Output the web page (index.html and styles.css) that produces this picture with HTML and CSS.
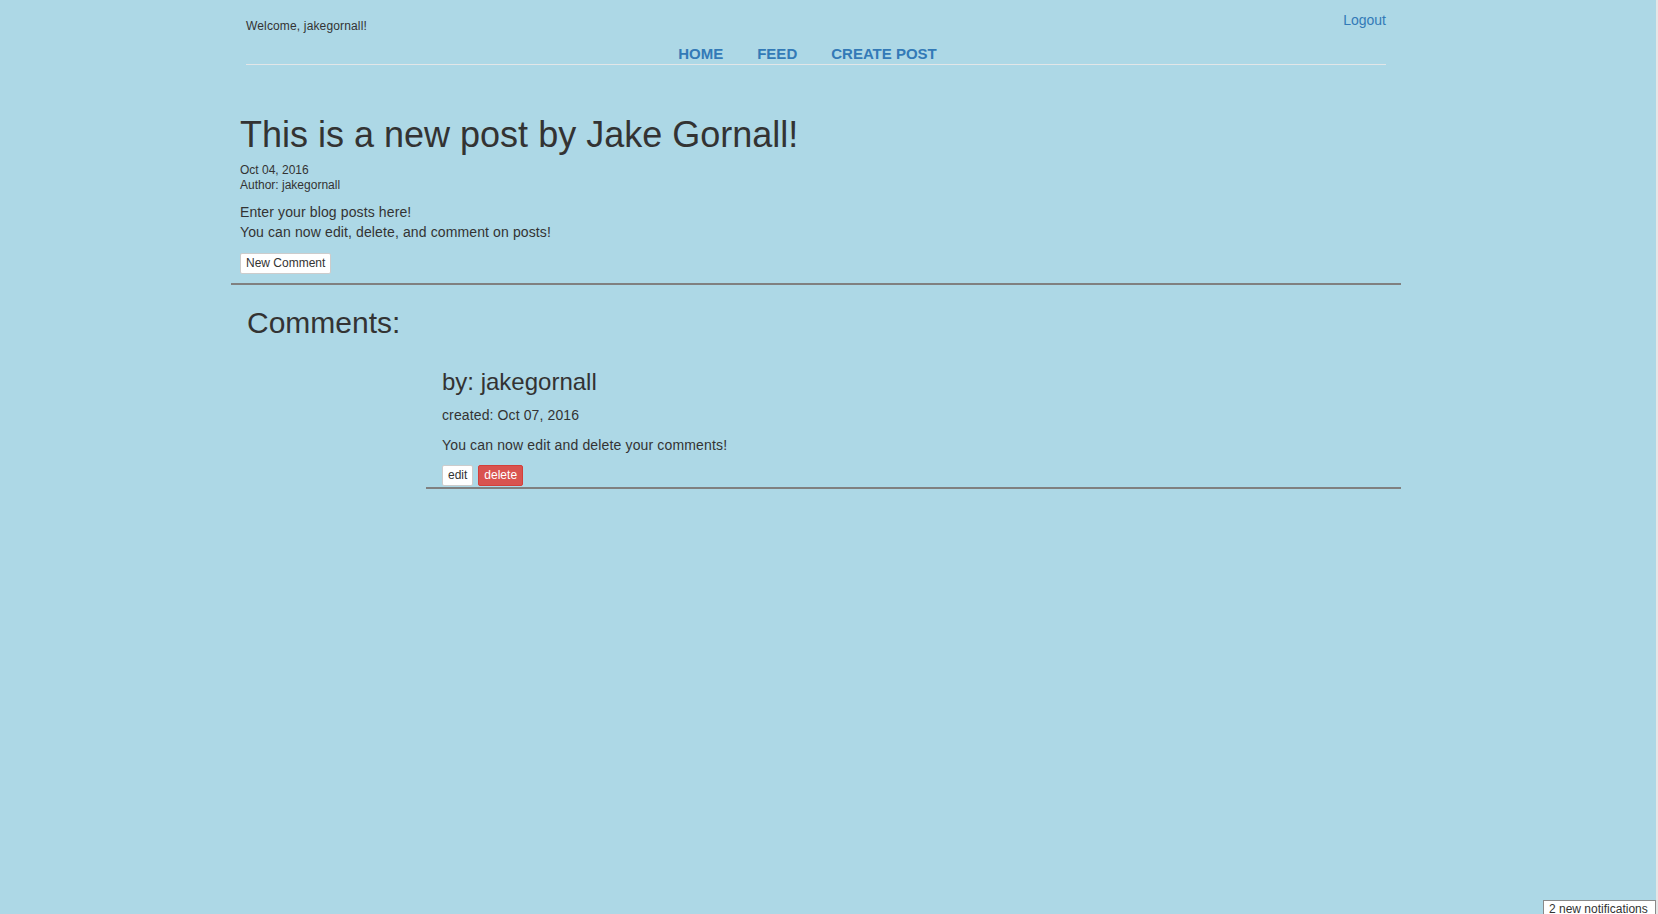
FILE: index.html
```html
<!DOCTYPE html>
<html>
<head>
<meta charset="utf-8">
<title>Post</title>
<link rel="stylesheet" href="styles.css">
</head>
<body>
<div class="page">
  <header class="header">
    <div class="top-row">
      <span class="welcome">Welcome, jakegornall!</span>
      <a class="logout" href="#">Logout</a>
    </div>
    <nav class="nav">
      <a href="#">HOME</a>
      <a href="#">FEED</a>
      <a href="#">CREATE POST</a>
    </nav>
  </header>

  <article class="post">
    <h1 class="post-title">This is a new post by Jake Gornall!</h1>
    <div class="post-meta">
      <div>Oct 04, 2016</div>
      <div>Author: jakegornall</div>
    </div>
    <div class="post-body">
      <div>Enter your blog posts here!</div>
      <div>You can now edit, delete, and comment on posts!</div>
    </div>
    <button class="btn btn-default">New Comment</button>
  </article>

  <section class="comments">
    <h2 class="comments-title">Comments:</h2>
    <div class="comment">
      <h3 class="comment-author">by: jakegornall</h3>
      <div class="comment-date">created: Oct 07, 2016</div>
      <div class="comment-text">You can now edit and delete your comments!</div>
      <div class="comment-actions">
        <button class="btn btn-default">edit</button>
        <button class="btn btn-danger">delete</button>
      </div>
    </div>
  </section>
</div>
<div class="notify">2 new notifications</div>
<div class="edge-strip"></div>
</body>
</html>
```

FILE: styles.css
```css
html, body {
  margin: 0;
  padding: 0;
}
body {
  background: #add8e6;
  font-family: "Liberation Sans", Arial, sans-serif;
  font-size: 14px;
  line-height: 20px;
  color: #333;
  min-height: 914px;
}
a {
  color: #337ab7;
  text-decoration: none;
}
.page {
  width: 1170px;
  margin-left: 231px;
}
.header {
  margin-left: 15px;
  width: 1140px;
  border-bottom: 1px solid #e2e6e8;
}
.top-row {
  display: flex;
  justify-content: space-between;
  align-items: flex-start;
  height: 44px;
}
.welcome {
  font-size: 12px;
  line-height: 16px;
  margin-top: 18px;
  letter-spacing: 0.15px;
}
.logout {
  font-size: 14px;
  line-height: 20px;
  margin-top: 10px;
}
.nav {
  display: flex;
  justify-content: center;
  gap: 34px;
  height: 20px;
  padding-right: 17px;
}
.nav a {
  font-size: 15px;
  font-weight: bold;
  line-height: 20px;
}
.post {
  padding-left: 9px;
  padding-bottom: 9px;
  border-bottom: 2px solid #808080;
}
.post-title {
  font-size: 36px;
  font-weight: normal;
  line-height: 40px;
  margin: 50px 0 0;
}
.post-meta {
  font-size: 12px;
  line-height: 15px;
  margin-top: 8px;
}
.post-body {
  margin-top: 9px;
  letter-spacing: 0.12px;
}
.btn {
  display: block;
  font-family: "Liberation Sans", Arial, sans-serif;
  font-size: 12px;
  line-height: 17px;
  padding: 1px 5px;
  border: 1px solid #ccc;
  border-radius: 2px;
  background: #fff;
  color: #333;
  margin: 0;
  cursor: pointer;
}
.post .btn {
  margin-top: 11px;
}
.comments-title {
  font-size: 30px;
  font-weight: normal;
  line-height: 33px;
  margin: 21px 0 0 16px;
}
.comment {
  margin-left: 195px;
  margin-top: 29px;
  padding-left: 16px;
  padding-bottom: 1px;
  border-bottom: 2px solid #808080;
}
.comment-author {
  font-size: 24px;
  font-weight: normal;
  line-height: 27px;
  margin: 0;
}
.comment-date {
  margin-top: 10px;
  letter-spacing: 0.12px;
}
.comment-text {
  margin-top: 10px;
  letter-spacing: 0.15px;
}
.comment-actions {
  display: flex;
  gap: 5px;
  margin-top: 10px;
}
.btn-danger {
  background: #d9534f;
  border-color: #d43f3a;
  color: #fff;
}
.notify {
  position: fixed;
  left: 1543px;
  top: 900px;
  width: 113px;
  height: 20px;
  background: #fff;
  border: 1px solid #8a8a8a;
  font-size: 12px;
  line-height: 16px;
  padding-left: 5px;
  box-sizing: border-box;
  color: #333;
  white-space: nowrap;
}
.edge-strip {
  position: fixed;
  right: 0;
  top: 0;
  width: 2px;
  height: 914px;
  background: #e6e6e6;
}
```
